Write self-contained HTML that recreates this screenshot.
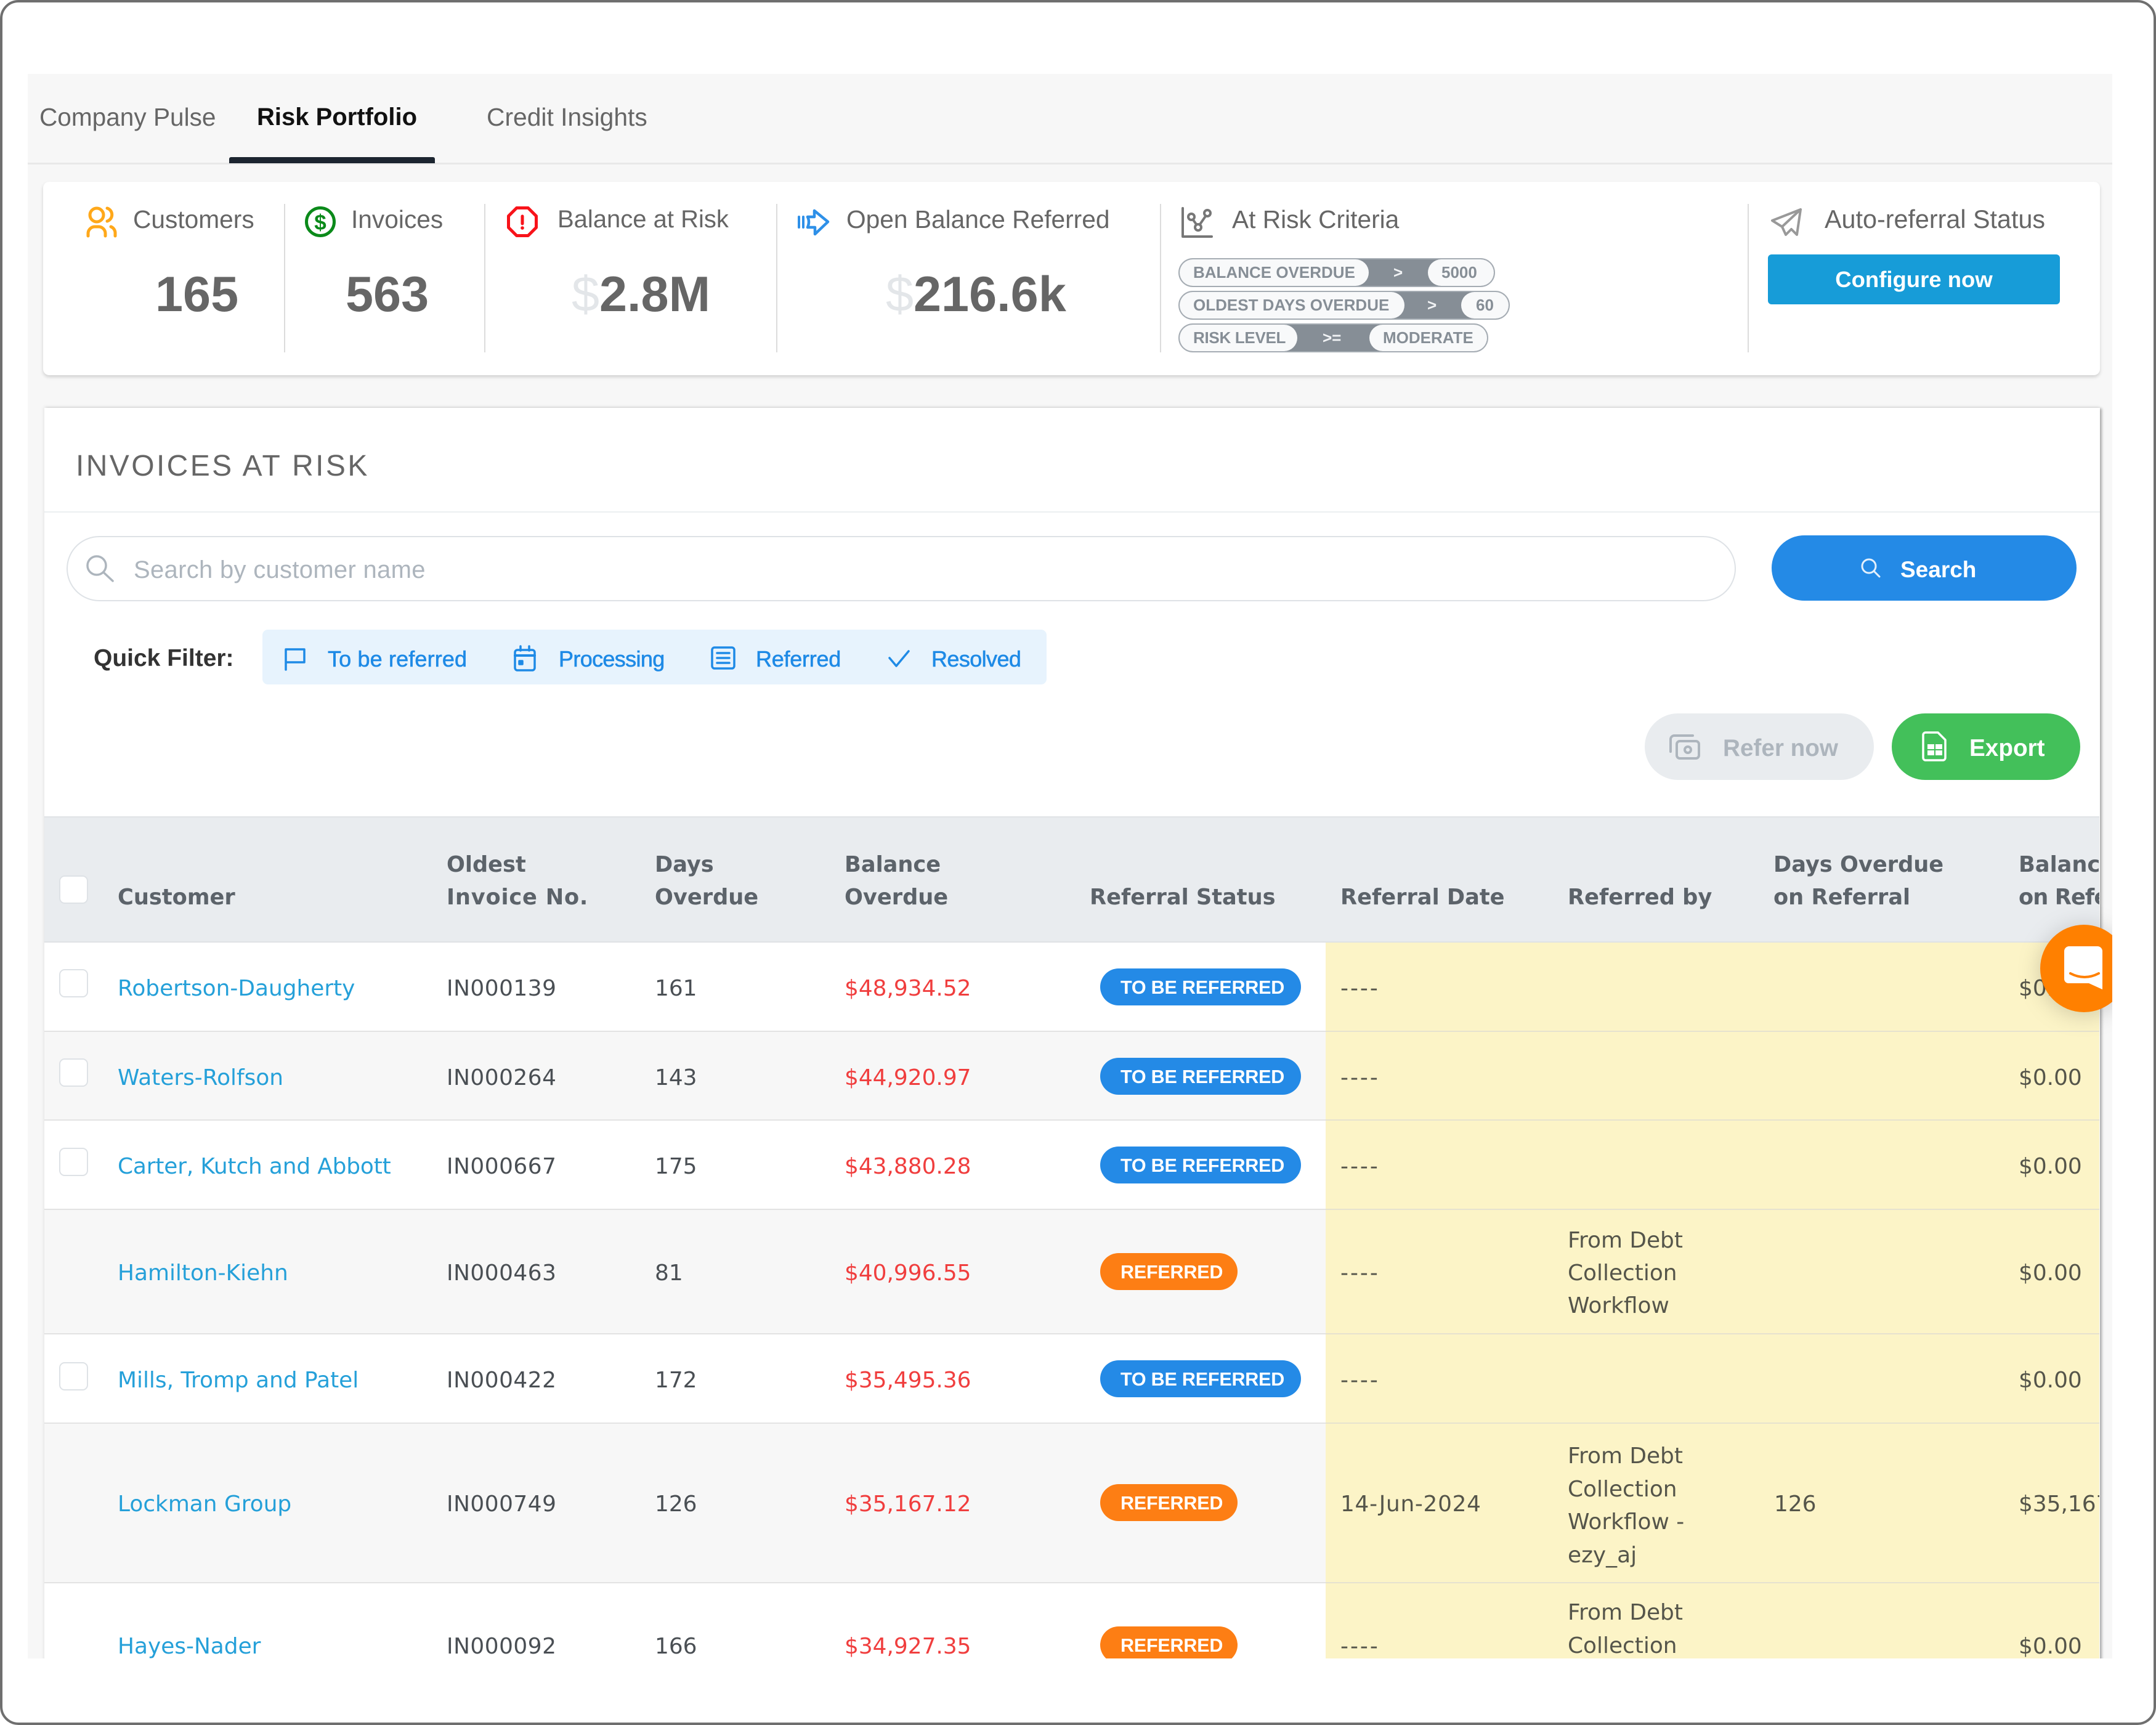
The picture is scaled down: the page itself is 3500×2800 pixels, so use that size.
<!DOCTYPE html>
<html lang="en"><head><meta charset="utf-8"><title>Risk Portfolio</title>
<style>
html,body{margin:0;padding:0;width:3500px;height:2800px;background:#fff;overflow:hidden}
.a{position:absolute;white-space:nowrap}
.ls{font-family:"Liberation Sans",sans-serif}
.lab{font:40.7px/50px "Liberation Sans",sans-serif;color:#666;top:331px}
.num{font:bold 81px/100px "Liberation Sans",sans-serif;color:#666;top:428px}
.dol{font:81px/100px "Liberation Sans",sans-serif;color:#e3e6e9;top:428px}
.div{position:absolute;width:2px;top:331px;height:241px;background:#dcdcdc}
.pill{position:absolute;height:43px;background:#868e96;border:2.5px solid #a5acb3;border-radius:24px;left:1913px;overflow:hidden}
.pt{position:absolute;top:0;height:43px;background:#f8f9fa;border-radius:24px;font:bold 26px/43px "Liberation Sans",sans-serif;color:#868e96;white-space:nowrap}
.op{position:absolute;top:0;font:bold 26px/43px "Liberation Sans",sans-serif;color:#f1f3f5;white-space:nowrap}
.f{font:36px/50px "Liberation Sans",sans-serif;color:#1e8ae6;-webkit-text-stroke:.6px #1e8ae6;top:1045px}
.h{font:bold 35.2px/54px "DejaVu Sans",sans-serif;color:#5c636a;margin-top:2px}
.c{font:35.9px/54px "DejaVu Sans",sans-serif;color:#4a4f54;margin-top:1px}
.n{letter-spacing:.5px}
.l{color:#25a0d9}
.r{color:#f03e3e}
.y{color:#55554a}
.row{position:absolute;left:72px;width:3336px;box-sizing:border-box;border-bottom:2px solid #e3e3e3}
.yc{position:absolute;left:2152px;width:1256px;background:#fcf4c7;box-sizing:border-box;border-bottom:2px solid #e6e2cf}
.cb{position:absolute;left:96px;width:47px;height:46px;box-sizing:border-box;background:#fff;border:2px solid #dee2e6;border-radius:9px}
.st{position:absolute;left:1786px;height:60px;border-radius:30px;color:#fff;font:bold 30.5px/62px "Liberation Sans",sans-serif;letter-spacing:-.2px;padding-left:33px;box-sizing:border-box;white-space:nowrap}
.tb{width:326px;background:#248ae6}
.rf{width:223px;background:#fd7e14}
</style></head>
<body>
<div class="a" style="left:45px;top:120px;width:3384px;height:2572px;background:#f7f7f7;overflow:hidden">
<div class="a" style="left:-45px;top:-120px;width:3500px;height:2800px">

<div class="a" style="left:45px;top:264px;width:3384px;height:3px;background:#e8e8e8"></div>
<div class="a ls" style="left:64px;top:165px;font-size:40.6px;line-height:50px;color:#666">Company Pulse</div>
<div class="a ls" style="left:417px;top:165px;font-size:40px;line-height:50px;font-weight:bold;color:#111">Risk Portfolio</div>
<div class="a ls" style="left:790px;top:165px;font-size:40.8px;line-height:50px;color:#666">Credit Insights</div>
<div class="a" style="left:372px;top:255px;width:334px;height:10px;background:#1c2530;border-radius:3px 3px 0 0"></div>

<!-- summary card -->
<div class="a" style="left:70px;top:295px;width:3339px;height:314px;background:#fff;border-radius:10px;box-shadow:0 3px 6px rgba(0,0,0,.16)"></div>
<div class="div" style="left:461px"></div><div class="div" style="left:786px"></div><div class="div" style="left:1260px"></div><div class="div" style="left:1883px"></div><div class="div" style="left:2837px"></div>
<div class="a lab" style="left:216px">Customers</div>
<div class="a lab" style="left:570px">Invoices</div>
<div class="a lab" style="left:905px;font-size:40px">Balance at Risk</div>
<div class="a lab" style="left:1374px">Open Balance Referred</div>
<div class="a lab" style="left:2000px">At Risk Criteria</div>
<div class="a lab" style="left:2962px;font-size:41.3px">Auto-referral Status</div>
<div class="a num" style="left:252px">165</div>
<div class="a num" style="left:561px">563</div>
<div class="a dol" style="left:928px">$</div><div class="a num" style="left:973px">2.8M</div>
<div class="a dol" style="left:1438px">$</div><div class="a num" style="left:1483px">216.6k</div>

<div class="pill" style="top:419px;width:510px"><div class="pt" style="left:-3px;width:310px;padding-left:25px;box-sizing:border-box">BALANCE OVERDUE</div><div class="op" style="left:347px">&gt;</div><div class="pt" style="left:403px;width:110px;padding-left:22px;box-sizing:border-box">5000</div></div>
<div class="pill" style="top:472px;width:534px"><div class="pt" style="left:-3px;width:368px;padding-left:25px;box-sizing:border-box">OLDEST DAYS OVERDUE</div><div class="op" style="left:402px">&gt;</div><div class="pt" style="left:457px;width:80px;padding-left:24px;box-sizing:border-box">60</div></div>
<div class="pill" style="top:525px;width:499px"><div class="pt" style="left:-3px;width:194px;padding-left:25px;box-sizing:border-box;letter-spacing:-.3px">RISK LEVEL</div><div class="op" style="left:232px">&gt;=</div><div class="pt" style="left:308px;width:194px;padding-left:22px;box-sizing:border-box">MODERATE</div></div>

<div class="a ls" style="left:2870px;top:413px;width:474px;height:81px;background:#179cd8;border-radius:6px;color:#fff;font-weight:bold;font-size:36.5px;line-height:81px;text-align:center">Configure now</div>

<!-- invoices card -->
<div class="a" style="left:72px;top:662px;width:3337px;height:2100px;background:#fff;box-shadow:3px 1px 4px rgba(0,0,0,.3),-1px -2px 5px rgba(0,0,0,.07)"></div>
<div class="a ls" style="left:123px;top:727px;font-size:48px;line-height:60px;color:#666;letter-spacing:3.4px">INVOICES AT RISK</div>
<div class="a" style="left:72px;top:830px;width:3337px;height:2px;background:#eceff1"></div>
<div class="a" style="left:108px;top:870px;width:2710px;height:106px;box-sizing:border-box;background:#fff;border:2px solid #dee2e6;border-radius:53px"></div>
<div class="a ls" style="left:217px;top:898px;font-size:40px;line-height:54px;color:#adb5bd;letter-spacing:.3px">Search by customer name</div>
<div class="a" style="left:2876px;top:869px;width:495px;height:106px;background:#248ae6;border-radius:53px"></div>
<div class="a ls" style="left:3085px;top:898px;font-size:37px;line-height:54px;font-weight:bold;color:#fff">Search</div>

<div class="a ls" style="left:152px;top:1044px;font-size:39px;line-height:50px;font-weight:bold;color:#333">Quick Filter:</div>
<div class="a" style="left:426px;top:1022px;width:1273px;height:89px;background:#e7f3fd;border-radius:9px"></div>
<div class="a f" style="left:532px;letter-spacing:.15px">To be referred</div>
<div class="a f" style="left:907px;letter-spacing:-.65px">Processing</div>
<div class="a f" style="left:1227px;letter-spacing:-.25px">Referred</div>
<div class="a f" style="left:1512px;letter-spacing:-.6px">Resolved</div>

<div class="a" style="left:2670px;top:1158px;width:372px;height:108px;background:#e9ecef;border-radius:54px"></div>
<div class="a ls" style="left:2797px;top:1188px;font-size:38.7px;line-height:54px;font-weight:bold;color:#adb5bd">Refer now</div>
<div class="a" style="left:3071px;top:1158px;width:306px;height:108px;background:#43c05a;border-radius:54px"></div>
<div class="a ls" style="left:3197px;top:1188px;font-size:38.7px;line-height:54px;font-weight:bold;color:#fff">Export</div>

<!-- table -->
<div class="a" style="left:72px;top:1325px;width:3336px;height:1367px;overflow:hidden">
<div class="a" style="left:-72px;top:-1325px;width:3500px;height:2800px">
<div class="a" style="left:72px;top:1325px;width:3336px;height:205px;background:#e9ecef;box-sizing:border-box;border-top:2px solid #e0e3e6;border-bottom:2px solid #dfe2e5"></div>
<div class="row" style="top:1530px;height:145px;background:#fff"></div>
<div class="row" style="top:1675px;height:144px;background:#f7f7f7"></div>
<div class="row" style="top:1819px;height:145px;background:#fff"></div>
<div class="row" style="top:1964px;height:202px;background:#f7f7f7"></div>
<div class="row" style="top:2166px;height:145px;background:#fff"></div>
<div class="row" style="top:2311px;height:259px;background:#f7f7f7"></div>
<div class="row" style="top:2570px;height:200px;background:#fff"></div>
<div class="yc" style="top:1530px;height:145px"></div>
<div class="yc" style="top:1675px;height:144px"></div>
<div class="yc" style="top:1819px;height:145px"></div>
<div class="yc" style="top:1964px;height:202px"></div>
<div class="yc" style="top:2166px;height:145px"></div>
<div class="yc" style="top:2311px;height:259px"></div>
<div class="yc" style="top:2570px;height:200px"></div>

<div class="cb" style="top:1421px"></div><div class="cb" style="top:1573px"></div><div class="cb" style="top:1718px"></div><div class="cb" style="top:1863px"></div><div class="cb" style="top:2211px"></div>

<div class="a h" style="left:191px;top:1428px">Customer</div>
<div class="a h" style="left:725px;top:1375px">Oldest</div><div class="a h" style="left:725px;top:1428px;letter-spacing:.8px">Invoice No.</div>
<div class="a h" style="left:1063px;top:1375px">Days</div><div class="a h" style="left:1063px;top:1428px">Overdue</div>
<div class="a h" style="left:1371px;top:1375px">Balance</div><div class="a h" style="left:1371px;top:1428px">Overdue</div>
<div class="a h" style="left:1769px;top:1428px">Referral Status</div>
<div class="a h" style="left:2176px;top:1428px">Referral Date</div>
<div class="a h" style="left:2545px;top:1428px">Referred by</div>
<div class="a h" style="left:2879px;top:1375px">Days Overdue</div><div class="a h" style="left:2879px;top:1428px">on Referral</div>
<div class="a h" style="left:3277px;top:1375px">Balance</div><div class="a h" style="left:3277px;top:1428px;letter-spacing:-.9px">on Referral</div>

<div class="a c l" style="left:191px;top:1577px">Robertson-Daugherty</div><div class="a c n" style="left:725px;top:1577px">IN000139</div><div class="a c" style="left:1063px;top:1577px">161</div><div class="a c r" style="left:1371px;top:1577px">$48,934.52</div><div class="st tb" style="top:1572px">TO BE REFERRED</div><div class="a c y" style="left:2176px;top:1577px;letter-spacing:3px">----</div><div class="a c y" style="left:3277px;top:1577px">$0.00</div>

<div class="a c l" style="left:191px;top:1722px">Waters-Rolfson</div><div class="a c n" style="left:725px;top:1722px">IN000264</div><div class="a c" style="left:1063px;top:1722px">143</div><div class="a c r" style="left:1371px;top:1722px">$44,920.97</div><div class="st tb" style="top:1717px">TO BE REFERRED</div><div class="a c y" style="left:2176px;top:1722px;letter-spacing:3px">----</div><div class="a c y" style="left:3277px;top:1722px">$0.00</div>

<div class="a c l" style="left:191px;top:1866px;letter-spacing:-.15px">Carter, Kutch and Abbott</div><div class="a c n" style="left:725px;top:1866px">IN000667</div><div class="a c" style="left:1063px;top:1866px">175</div><div class="a c r" style="left:1371px;top:1866px">$43,880.28</div><div class="st tb" style="top:1861px">TO BE REFERRED</div><div class="a c y" style="left:2176px;top:1866px;letter-spacing:3px">----</div><div class="a c y" style="left:3277px;top:1866px">$0.00</div>

<div class="a c l" style="left:191px;top:2039px">Hamilton-Kiehn</div><div class="a c n" style="left:725px;top:2039px">IN000463</div><div class="a c" style="left:1063px;top:2039px">81</div><div class="a c r" style="left:1371px;top:2039px">$40,996.55</div><div class="st rf" style="top:2034px">REFERRED</div><div class="a c y" style="left:2176px;top:2039px;letter-spacing:3px">----</div><div class="a c y" style="left:2545px;top:1986px">From Debt</div><div class="a c y" style="left:2545px;top:2039px">Collection</div><div class="a c y" style="left:2545px;top:2092px">Workflow</div><div class="a c y" style="left:3277px;top:2039px">$0.00</div>

<div class="a c l" style="left:191px;top:2213px">Mills, Tromp and Patel</div><div class="a c n" style="left:725px;top:2213px">IN000422</div><div class="a c" style="left:1063px;top:2213px">172</div><div class="a c r" style="left:1371px;top:2213px">$35,495.36</div><div class="st tb" style="top:2208px">TO BE REFERRED</div><div class="a c y" style="left:2176px;top:2213px;letter-spacing:3px">----</div><div class="a c y" style="left:3277px;top:2213px">$0.00</div>

<div class="a c l" style="left:191px;top:2414px">Lockman Group</div><div class="a c n" style="left:725px;top:2414px">IN000749</div><div class="a c" style="left:1063px;top:2414px">126</div><div class="a c r" style="left:1371px;top:2414px">$35,167.12</div><div class="st rf" style="top:2409px">REFERRED</div><div class="a c y" style="left:2176px;top:2414px;letter-spacing:.7px">14-Jun-2024</div><div class="a c y" style="left:2545px;top:2336px">From Debt</div><div class="a c y" style="left:2545px;top:2390px">Collection</div><div class="a c y" style="left:2545px;top:2443px">Workflow -</div><div class="a c y" style="left:2545px;top:2497px">ezy_aj</div><div class="a c y" style="left:2880px;top:2414px">126</div><div class="a c y" style="left:3277px;top:2414px">$35,167.12</div>

<div class="a c l" style="left:191px;top:2645px">Hayes-Nader</div><div class="a c n" style="left:725px;top:2645px">IN000092</div><div class="a c" style="left:1063px;top:2645px">166</div><div class="a c r" style="left:1371px;top:2645px">$34,927.35</div><div class="st rf" style="top:2640px">REFERRED</div><div class="a c y" style="left:2176px;top:2645px;letter-spacing:3px">----</div><div class="a c y" style="left:2545px;top:2590px">From Debt</div><div class="a c y" style="left:2545px;top:2644px">Collection</div><div class="a c y" style="left:3277px;top:2645px">$0.00</div>
</div></div>

<svg class="a" style="left:0;top:0" width="3500" height="2800" viewBox="0 0 3500 2800" fill="none" stroke-linecap="round" stroke-linejoin="round">
<!-- customers -->
<g stroke="#ffa81a" stroke-width="5"><circle cx="157" cy="349" r="11"/><path d="M174 338A11 11 0 0 1 174 359"/><path d="M143 383V379A11 11 0 0 1 154 368H160A11 11 0 0 1 171 379V383"/><path d="M180 368A11 11 0 0 1 187 379V383"/></g>
<!-- invoices -->
<circle cx="520" cy="360" r="22.5" stroke="#0b8a1a" stroke-width="5"/>
<text x="520" y="373" text-anchor="middle" font-family="Liberation Sans" font-weight="bold" font-size="35" fill="#0b8a1a">$</text>
<!-- balance -->
<path d="M838.7 337.5H857.3L870.5 350.7V369.3L857.3 382.5H838.7L825.5 369.3V350.7Z" stroke="#f8131a" stroke-width="5"/>
<path d="M848 351V363" stroke="#f8131a" stroke-width="5"/><circle cx="848" cy="370" r="2.8" fill="#f8131a"/>
<!-- open balance -->
<path d="M1297 352V369M1304 352V369" stroke="#2e90e8" stroke-width="4"/>
<path d="M1311 352H1322V342L1344 360L1323 380V369H1311Q1315 360 1311 352Z" stroke="#2e90e8" stroke-width="4.5"/>
<!-- at risk -->
<g stroke="#777" stroke-width="4"><path d="M1920 338V384H1967"/><circle cx="1934" cy="352" r="5"/><circle cx="1960" cy="346" r="5"/><circle cx="1945" cy="369" r="5"/><path d="M1937 357L1942 364M1957 351L1948 364"/></g>
<!-- plane -->
<path d="M2923 340L2877 358L2893 368L2899 381L2908 372L2917 381ZM2923 340L2893 368" stroke="#999" stroke-width="4"/>
<!-- search -->
<circle cx="157" cy="918" r="15" stroke="#adb5bd" stroke-width="3.5"/><path d="M168 929L183 943" stroke="#adb5bd" stroke-width="3.5"/>
<circle cx="3034" cy="919" r="11" stroke="#e3f0fc" stroke-width="3"/><path d="M3042 927L3051 936" stroke="#e3f0fc" stroke-width="3"/>
<!-- filter icons -->
<g stroke="#1e8ae6" stroke-width="3.5"><path d="M464 1087V1054H494V1075H464"/>
<rect x="836" y="1055" width="32" height="33" rx="4"/><path d="M845 1049V1056M859 1049V1056"/><path d="M836 1064H868" stroke-width="4"/><rect x="843" y="1073" width="5" height="5" fill="#1e8ae6"/>
<rect x="1156" y="1051" width="36" height="34" rx="4"/><path d="M1164 1060H1184M1164 1068H1184M1164 1076H1184"/>
<path d="M1444 1068L1455 1081L1475 1057"/></g>
<!-- refer now -->
<g stroke="#adb5bd" stroke-width="4"><path d="M2712 1220V1200A6 6 0 0 1 2718 1194H2748"/><rect x="2722" y="1203" width="36" height="28" rx="5"/><circle cx="2740" cy="1217" r="5"/></g>
<!-- export -->
<path d="M3126 1189H3146L3158 1201V1230A4 4 0 0 1 3154 1234H3126A4 4 0 0 1 3122 1230V1193A4 4 0 0 1 3126 1189Z" stroke="#fff" stroke-width="3.5"/>
<rect x="3129" y="1208" width="11" height="8" fill="#fff"/><rect x="3142" y="1208" width="11" height="8" fill="#fff"/><rect x="3129" y="1218" width="11" height="8" fill="#fff"/><rect x="3142" y="1218" width="11" height="8" fill="#fff"/>
<!-- chat -->
<circle cx="3383" cy="1572" r="71" fill="#ff8000" style="filter:drop-shadow(0 4px 18px rgba(0,0,0,.18))"/>
<path d="M3351 1544A8 8 0 0 1 3359 1536H3405A8 8 0 0 1 3413 1544V1606L3391 1596H3358A7 7 0 0 1 3351 1589Z" fill="#fff"/>
<path d="M3361 1580Q3384 1592 3407 1580" stroke="#ff8000" stroke-width="4"/>
</svg>
</div></div>

<div class="a" style="left:0;top:0;width:3500px;height:2800px;box-sizing:border-box;border:4px solid #6f6f6f;border-radius:30px"></div>
</body></html>
